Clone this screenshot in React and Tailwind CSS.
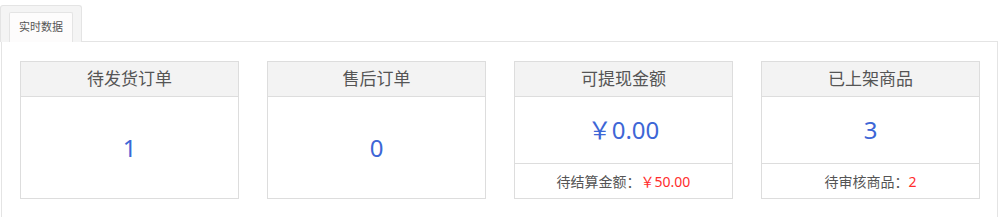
import React from 'react'

const cards = [
  { title: '待发货订单', value: '1' },
  { title: '售后订单', value: '0' },
  { title: '可提现金额', value: '￥0.00', footLabel: '待结算金额：', footValue: '￥50.00' },
  { title: '已上架商品', value: '3', footLabel: '待审核商品：', footValue: '2' }
]

const StatCard = ({ data }) => {
  return (
    <div className="flex h-[138px] w-[219px] flex-col border border-[#dddddd] bg-white">
      <div className="flex h-[35px] shrink-0 items-center justify-center border-b border-[#dddddd] bg-[#f3f3f3] text-[17px] text-[#555555]">
        {data.title}
      </div>
      <div className="flex flex-1 items-center justify-center text-[24px] text-[#3d66d6]">
        {data.value}
      </div>
      {data.footLabel && (
        <div className="flex h-[35px] shrink-0 items-center justify-center border-t border-[#dddddd] text-[14px] text-[#555555]">
          {data.footLabel}
          <span className="text-[#ff2d2d]">{data.footValue}</span>
        </div>
      )}
    </div>
  )
}

const App = () => {
  return (
    <div
      className="h-[217px] w-[1000px] overflow-hidden bg-white"
      style={{ fontFamily: '"Noto Sans", "Noto Sans CJK SC", sans-serif' }}
    >
      <div className="pt-[5px]">
        <div className="relative z-10 -mb-px flex h-[37px] w-[82px] items-end justify-center rounded-t-[3px] border border-b-0 border-[#e4e4e4] bg-[#f4f4f4]">
          <div className="flex h-[30px] w-[64px] items-center justify-center rounded-t-[2px] border border-b-0 border-[#e4e4e4] bg-[#fdfcfc] text-[11px] text-[#555555]">
            实时数据
          </div>
        </div>
        <div className="ml-px h-[200px] w-[997px] border border-[#e4e4e4] pl-[18px] pt-[19px]">
          <div className="flex gap-[28px]">
            {cards.map((card) => (
              <StatCard key={card.title} data={card} />
            ))}
          </div>
        </div>
      </div>
    </div>
  )
}

export default App
